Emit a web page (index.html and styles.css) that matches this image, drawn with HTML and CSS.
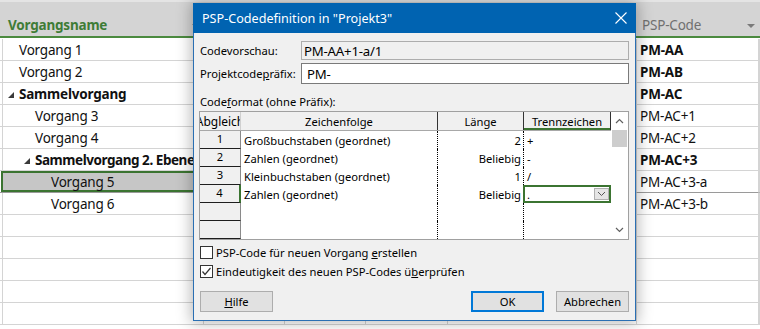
FILE: index.html
```html
<!DOCTYPE html>
<html lang="de">
<head>
<meta charset="utf-8">
<title>PSP-Codedefinition</title>
<link rel="stylesheet" href="styles.css">
</head>
<body>
<div class="sheet">
  <div class="hdr">
    <div class="hc"></div>
    <div class="hc h1"><span class="hname">Vorgangsname</span><span class="tri"></span></div>
    <div class="hc"></div><div class="hc"></div><div class="hc"></div><div class="hc"></div>
    <div class="hc h7"><span class="hcode">PSP-Code</span><span class="tri"></span></div>
    <div class="hc"></div>
  </div>
  <div class="row"><div class="c"></div><div class="c n l1">Vorgang 1</div><div class="c"></div><div class="c"></div><div class="c"></div><div class="c"></div><div class="c code b">PM-AA</div><div class="c"></div></div>
  <div class="row"><div class="c"></div><div class="c n l1">Vorgang 2</div><div class="c"></div><div class="c"></div><div class="c"></div><div class="c"></div><div class="c code b">PM-AB</div><div class="c"></div></div>
  <div class="row"><div class="c"></div><div class="c n l0 b"><svg class="coll" width="6" height="6" viewBox="0 0 6 6"><polygon points="0,6 6,6 6,0" fill="#3a3a3a"/></svg><span>Sammelvorgang</span></div><div class="c"></div><div class="c"></div><div class="c"></div><div class="c"></div><div class="c code b">PM-AC</div><div class="c"></div></div>
  <div class="row"><div class="c"></div><div class="c n l2">Vorgang 3</div><div class="c"></div><div class="c"></div><div class="c"></div><div class="c"></div><div class="c code">PM-AC+1</div><div class="c"></div></div>
  <div class="row"><div class="c"></div><div class="c n l2">Vorgang 4</div><div class="c"></div><div class="c"></div><div class="c"></div><div class="c"></div><div class="c code">PM-AC+2</div><div class="c"></div></div>
  <div class="row"><div class="c"></div><div class="c n l1s b"><svg class="coll" width="6" height="6" viewBox="0 0 6 6"><polygon points="0,6 6,6 6,0" fill="#3a3a3a"/></svg><span class="tight">Sammelvorgang 2. Ebene</span></div><div class="c"></div><div class="c"></div><div class="c"></div><div class="c"></div><div class="c code b">PM-AC+3</div><div class="c"></div></div>
  <div class="row sel"><div class="c"></div><div class="c n l3 selc">Vorgang 5</div><div class="c"></div><div class="c"></div><div class="c"></div><div class="c"></div><div class="c code">PM-AC+3-a</div><div class="c"></div></div>
  <div class="row"><div class="c"></div><div class="c n l3">Vorgang 6</div><div class="c"></div><div class="c"></div><div class="c"></div><div class="c"></div><div class="c code">PM-AC+3-b</div><div class="c"></div></div>
  <div class="row"><div class="c"></div><div class="c"></div><div class="c"></div><div class="c"></div><div class="c"></div><div class="c"></div><div class="c"></div><div class="c"></div></div>
  <div class="row"><div class="c"></div><div class="c"></div><div class="c"></div><div class="c"></div><div class="c"></div><div class="c"></div><div class="c"></div><div class="c"></div></div>
  <div class="row"><div class="c"></div><div class="c"></div><div class="c"></div><div class="c"></div><div class="c"></div><div class="c"></div><div class="c"></div><div class="c"></div></div>
  <div class="row"><div class="c"></div><div class="c"></div><div class="c"></div><div class="c"></div><div class="c"></div><div class="c"></div><div class="c"></div><div class="c"></div></div>
  <div class="row"><div class="c"></div><div class="c"></div><div class="c"></div><div class="c"></div><div class="c"></div><div class="c"></div><div class="c"></div><div class="c"></div></div>
</div>

<div class="dlg">
  <div class="title">
    <span>PSP-Codedefinition in "Projekt3"</span>
    <svg class="close" width="12" height="12" viewBox="0 0 12 12"><path d="M0.5 0.5L11.5 11.5M11.5 0.5L0.5 11.5" stroke="#fff" stroke-width="1.1"/></svg>
  </div>
  <div class="body">
    <div class="field f1"><span class="lbl">Codevorschau:</span><div class="inp ro">PM-AA+1-a/1</div></div>
    <div class="field f2"><span class="lbl">Projektcode<u>p</u>räfix:</span><div class="inp pre">PM-</div></div>
    <div class="sect"><span>Code<u>f</u>ormat (ohne Präfix):</span></div>
    <div class="grid">
      <div class="tbl">
        <div class="thr">
          <div class="rh th0"><span>Abgleich</span></div>
          <div class="th zf">Zeichenfolge</div>
          <div class="th ln">Länge</div>
          <div class="th tz">Trennzeichen</div>
        </div>
        <div class="tr"><div class="rh">1</div><div class="td zf">Großbuchstaben (geordnet)</div><div class="td ln">2</div><div class="td tz">+</div></div>
        <div class="tr"><div class="rh">2</div><div class="td zf">Zahlen (geordnet)</div><div class="td ln">Beliebig</div><div class="td tz">-</div></div>
        <div class="tr"><div class="rh">3</div><div class="td zf">Kleinbuchstaben (geordnet)</div><div class="td ln">1</div><div class="td tz">/</div></div>
        <div class="tr"><div class="rh rh4">4</div><div class="td zf">Zahlen (geordnet)</div><div class="td ln">Beliebig</div><div class="td tz act"><span>.</span><span class="dd"><svg width="9" height="6" viewBox="0 0 9 6"><polyline points="1,1 4.5,4.5 8,1" fill="none" stroke="#555" stroke-width="1"/></svg></span></div></div>
        <div class="tr"><div class="rh"></div><div class="td zf"></div><div class="td ln"></div><div class="td tz"></div></div>
        <div class="tr"><div class="rh"></div><div class="td zf"></div><div class="td ln"></div><div class="td tz"></div></div>
      </div>
      <div class="sb">
        <div class="arr"><svg width="9" height="6" viewBox="0 0 9 6"><polyline points="1,5 4.5,1.5 8,5" fill="none" stroke="#606060" stroke-width="1.2"/></svg></div>
        <div class="thumb"></div>
        <div class="track"></div>
        <div class="arr"><svg width="9" height="6" viewBox="0 0 9 6"><polyline points="1,1 4.5,4.5 8,1" fill="none" stroke="#606060" stroke-width="1.2"/></svg></div>
      </div>
    </div>
    <div class="chk c1"><span class="box"></span><span>PSP-Code für neuen Vorgang <u>e</u>rstellen</span></div>
    <div class="chk c2"><span class="box"><svg width="11" height="11" viewBox="0 0 11 11"><polyline points="1.5,5.5 4,8.5 9.5,2" fill="none" stroke="#333" stroke-width="1.2"/></svg></span><span>Eindeutigkeit des neuen PSP-Codes ü<u>b</u>erprüfen</span></div>
    <div class="btns">
      <div class="btn"><span><u>H</u>ilfe</span></div>
      <div class="sp"></div>
      <div class="btn def">OK</div>
      <div class="btn">Abbrechen</div>
    </div>
  </div>
</div>
</body>
</html>
```

FILE: styles.css
```css
* { box-sizing: border-box; margin: 0; padding: 0; }
body {
  width: 760px; height: 329px; overflow: hidden; background: #fff;
  font-family: "Noto Sans", "Open Sans", sans-serif; position: relative;
}
u { text-decoration: underline; text-underline-offset: 1px; }

/* spreadsheet */
.sheet { font-size: 13.5px; letter-spacing: -0.2px; color: #111; }
.hdr, .row {
  display: grid;
  grid-template-columns: 3px 201px 81px 81px 82px 189px 122px 1fr;
}
.hdr {
  height: 38px; background: #d4d4d4;
  border-top: 2px solid #e4e4e4; border-bottom: 2px solid #4b8a3f;
  margin-bottom: 1px;
}
.hc { display: flex; align-items: center; padding-top: 11px; position: relative; }
.h1 { padding-left: 5px; }
.h7 { padding-left: 5px; }
.hname { color: #3e7c36; font-weight: 700; }
.hcode { color: #707070; }
.tri {
  margin-left: auto; margin-right: 4px; margin-top: 3px;
  width: 0; height: 0; border-left: 4px solid transparent; border-right: 4px solid transparent;
  border-top: 4px solid #7a7a7a;
}
.row { height: 22px; }
.c {
  border-right: 1px solid #d4d4d4; border-bottom: 1px solid #d4d4d4;
  display: flex; align-items: center; white-space: nowrap; overflow: hidden;
}
.b { font-weight: 700; }
.tight { letter-spacing: -0.45px; }
.l0 { padding-left: 5px; }
.l1 { padding-left: 16px; }
.l1s { padding-left: 21px; }
.l2 { padding-left: 32px; }
.l3 { padding-left: 48px; }
.coll { margin-right: 5px; margin-top: 2px; flex: none; }
.code { padding-left: 3px; }
.selc { background: #c6c6c6; box-shadow: inset 0 0 0 2px #3b7431; margin-left: -2px; padding-left: 50px; }
.sel .c { border-bottom-color: #9a9a9a; }

/* dialog */
.dlg {
  position: absolute; left: 193px; top: 3px; width: 443px; height: 318px;
  background: #f0f0f0; border: 1px solid #2a6fb3;
  box-shadow: 0 0 14px 2px rgba(0,0,0,0.28);
  font-size: 11.2px; color: #000;
}
.title {
  background: #0063b1; color: #fff; font-size: 12.6px;
  display: flex; align-items: center; padding-left: 9px; padding-right: 9px;
  margin: -1px -1px 0; height: 30px;
}
.close { margin-left: auto; }
.body { padding: 0 6px; }
.field { display: flex; align-items: center; }
.f1 { margin-top: 8px; }
.f2 { margin-top: 3px; }
.lbl { width: 101px; flex: none; }
.inp {
  flex: 1; border: 1px solid #7a7a7a; background: #fff; height: 21px;
  display: flex; align-items: center; padding-left: 5px; font-size: 13.2px; letter-spacing: -0.2px;
}
.inp.ro { background: #f0f0f0; border-color: #adadad; height: 19px; padding-left: 2px; }
.sect { height: 27px; display: flex; align-items: flex-end; padding-bottom: 2px; }

.grid {
  display: flex; margin-left: -1px; width: 430px;
  border: 1px solid #a0a0a0; background: #fff;
}
.tbl { width: 411px; }
.thr { display: flex; height: 19px; background: #f0f0f0; border-bottom: 1px solid #a8a8a8; }
.tr { display: flex; height: 18px; }
.rh {
  width: 41px; flex: none; background: #f0f0f0;
  border-bottom: 1px solid #1e1e1e; border-right: 1px solid #8a8a8a;
  display: flex; justify-content: center; align-items: flex-start;
  line-height: 15px;
}
.rh4 { border-right: 2px solid #3b7431; }
.th0 { border-bottom: none; border-right: 1px solid #d0d0d0; overflow: hidden; white-space: nowrap; align-items: center; font-size: 12px; }
.th0 span { flex: none; }
.th, .td { display: flex; align-items: center; white-space: nowrap; overflow: hidden; }
.th { justify-content: center; }
.zf { width: 196px; flex: none; }
.td.zf { padding-left: 3px; }
.ln { width: 86px; flex: none; }
.th.ln { border-left: 1px solid #333; }
.td.ln { border-left: 1px dotted #000; justify-content: flex-end; padding-right: 2px; }
.tz { width: 88px; flex: none; }
.th.tz { border-left: 1px solid #333; border-right: 1px solid #333; box-shadow: inset 0 -2px 0 #3b7431; }
.td.tz { border-left: 1px dotted #000; padding-left: 3px; }
.td.act { box-shadow: inset 0 0 0 2px #3b7431; border-left: none; padding-left: 4px; }
.dd {
  margin-left: auto; margin-right: 2px; width: 15px; height: 12px;
  background: #e5e5e5; border: 1px solid #b0b0b0;
  display: flex; align-items: center; justify-content: center;
}
.sb { width: 17px; flex: none; display: flex; flex-direction: column; background: #fff; }
.arr { height: 18px; display: flex; align-items: center; justify-content: center; }
.thumb { height: 17px; margin: 0 1px; background: #cdcdcd; }
.track { flex: 1; }

.chk { display: flex; align-items: center; height: 19px; }
.c1 { margin-top: 3px; }
.box {
  width: 13px; height: 13px; border: 1px solid #333; background: #fff;
  margin-right: 3px; display: flex; align-items: center; justify-content: center;
}
.btns { display: flex; margin-top: 10px; }
.sp { flex: 1; }
.btn {
  width: 73px; height: 21px; background: #e1e1e1; border: 1px solid #adadad;
  display: flex; align-items: center; justify-content: center;
}
.btn.def { border: 2px solid #0078d7; margin-right: 12px; }
```
